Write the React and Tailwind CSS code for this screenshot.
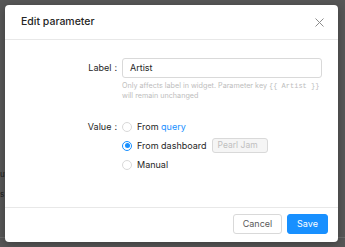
export default function App() {
  const font = { fontFamily: 'Inter, "Noto Sans", sans-serif' };
  return (
    <div className="relative w-[345px] h-[247px] overflow-hidden bg-[#575757]" style={font}>
      {/* page behind the mask */}
      <div className="absolute left-0 top-[168px] text-[8px] leading-[12px] text-[#1a1a1a]">
        <div>ut</div>
        <div className="mt-[8px]">s</div>
      </div>
      <div className="absolute left-0 top-[237px] w-[345px] h-px bg-[#6a6a6a]" />

      {/* dialog */}
      <div className="absolute left-[5px] top-[5px] w-[333px] h-[237px] bg-white rounded-[4px] shadow-[0_2px_8px_rgba(0,0,0,0.3)] flex flex-col">
        <div className="h-[35px] flex items-center justify-between pl-[16px] pr-[14px] border-b border-[#e8e8e8]">
          <span className="text-[10.5px] font-medium text-[#262626]">Edit parameter</span>
          <svg width="9" height="9" viewBox="0 0 9 9" className="text-[#8c8c8c]">
            <path d="M0.5 0.5 L8.5 8.5 M8.5 0.5 L0.5 8.5" stroke="currentColor" strokeWidth="1" fill="none" />
          </svg>
        </div>

        <div className="flex-1 pt-[18px]">
          <div className="flex items-start">
            <div className="w-[117px] h-[20px] flex items-center justify-end pr-[5px] text-[9px] text-[#262626]">
              Label<span className="ml-[3px]">:</span>
            </div>
            <div className="w-[200px]">
              <div className="h-[20px] border border-[#d9d9d9] rounded-[3px] flex items-center px-[7px] text-[9px] text-[#262626]">
                Artist
              </div>
              <div className="mt-[3px] text-[7.2px] leading-[10px] text-[#bdbdbd]">
                <div className="whitespace-nowrap">
                  Only affects label in widget. Parameter key{' '}
                  <span className="text-[7px]" style={{ fontFamily: '"Liberation Mono", monospace' }}>{'{{ Artist }}'}</span>
                </div>
                <div>will remain unchanged</div>
              </div>
            </div>
          </div>

          <div className="flex items-start mt-[18px]">
            <div className="w-[117px] h-[15px] flex items-center justify-end pr-[5px] text-[9px] text-[#262626]">
              Value<span className="ml-[3px]">:</span>
            </div>
            <div className="flex flex-col gap-[4px]">
              <div className="h-[15px] flex items-center text-[9px] text-[#262626]">
                <span className="w-[10px] h-[10px] rounded-full border border-[#d9d9d9] bg-white" />
                <span className="ml-[5px]">From <span className="text-[#1890ff]">query</span></span>
              </div>
              <div className="h-[15px] flex items-center text-[9px] text-[#262626]">
                <span className="w-[10px] h-[10px] rounded-full border border-[#1890ff] bg-white flex items-center justify-center">
                  <span className="w-[5px] h-[5px] rounded-full bg-[#1890ff]" />
                </span>
                <span className="ml-[5px]">From dashboard</span>
                <span className="ml-[5px] w-[56px] h-[15px] border border-[#d9d9d9] bg-[#f5f5f5] rounded-[3px] flex items-center px-[5px] text-[8.5px] text-[#bfbfbf]">
                  Pearl Jam
                </span>
              </div>
              <div className="h-[15px] flex items-center text-[9px] text-[#262626]">
                <span className="w-[10px] h-[10px] rounded-full border border-[#d9d9d9] bg-white" />
                <span className="ml-[5px]">Manual</span>
              </div>
            </div>
          </div>
        </div>

        <div className="h-[35px] border-t border-[#e8e8e8] flex items-start justify-end pt-[6px] pr-[10px] gap-[5px]">
          <button className="w-[49px] h-[20px] border border-[#d9d9d9] rounded-[3px] bg-white text-[9px] text-[#595959]">
            Cancel
          </button>
          <button className="w-[41px] h-[20px] border border-[#1890ff] rounded-[3px] bg-[#1890ff] text-[9px] text-white">
            Save
          </button>
        </div>
      </div>
    </div>
  );
}
